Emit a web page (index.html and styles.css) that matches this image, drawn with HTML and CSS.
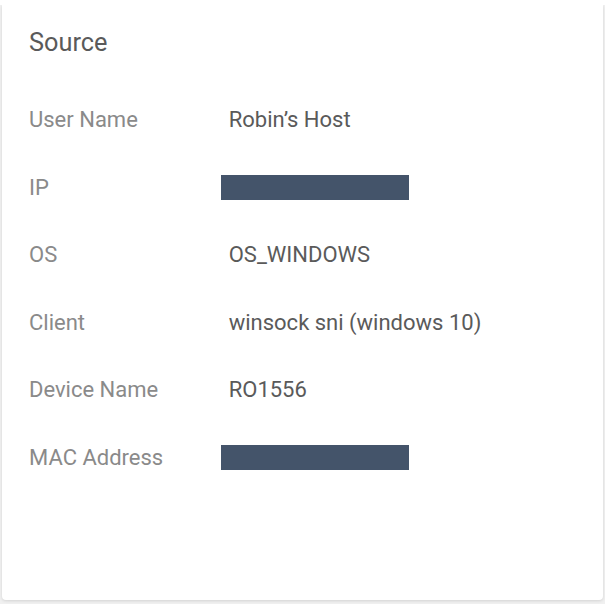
FILE: index.html
```html
<!DOCTYPE html>
<html>
  <head>
    <meta charset="utf-8">
    <title>Source</title>
    <link rel="stylesheet" href="styles.css">
  </head>
  <body>
    <div class="panel">
      <div class="card">
        <h2 class="card-title">Source</h2>
        <dl class="details">
          <dt>User Name</dt>
          <dd>Robin’s Host</dd>
          <dt>IP</dt>
          <dd><span class="redacted"></span></dd>
          <dt>OS</dt>
          <dd>OS_WINDOWS</dd>
          <dt>Client</dt>
          <dd>winsock sni (windows 10)</dd>
          <dt>Device Name</dt>
          <dd>RO1556</dd>
          <dt>MAC Address</dt>
          <dd><span class="redacted"></span></dd>
        </dl>
      </div>
    </div>
  </body>
</html>
```

FILE: styles.css
```css
body {
  margin: 0;
  padding-top: 5px;
  background: #fff;
  font-family: Roboto, "Liberation Sans", sans-serif;
}
.panel {
  box-sizing: border-box;
  height: 599px;
  padding: 0 2px 4px;
  overflow: hidden;
  background: #f0f0f0;
}
.card {
  box-sizing: border-box;
  height: 595px;
  padding: 22px 27px 0;
  background: #fff;
  border-radius: 0 0 4px 4px;
  box-shadow: 0 1px 3px rgba(0, 0, 0, 0.12);
}
.card-title {
  margin: 0;
  font-size: 25.3px;
  line-height: 31px;
  font-weight: 400;
  color: #5a5a5a;
}
.details {
  display: grid;
  grid-template-columns: 199.7px 1fr;
  grid-auto-rows: 67.5px;
  align-items: center;
  margin: 28px 0 0;
  font-size: 22px;
}
.details dt {
  color: #8a8a8a;
}
.details dd {
  margin: 0;
  color: #5a5a5a;
}
.redacted {
  display: block;
  width: 188px;
  height: 25px;
  margin-left: -8px;
  background: #44546a;
}
```
